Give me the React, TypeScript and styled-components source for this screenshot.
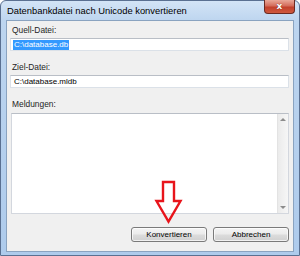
import React from "react";
import styled, { createGlobalStyle } from "styled-components";

const Global = createGlobalStyle`
  html, body { margin: 0; padding: 0; background: #ffffff; }
  body { font-family: "Liberation Sans", Arial, sans-serif; }
`;

const Stage = styled.div`
  position: relative;
  width: 300px;
  height: 256px;
  overflow: hidden;
`;

const Frame = styled.div`
  box-sizing: border-box;
  width: 300px;
  height: 256px;
  display: flex;
  flex-direction: column;
  border: 1px solid #5a7091;
  border-radius: 6px 6px 0 0;
  background: linear-gradient(180deg, #d3e4f6 0px, #bdd5ef 20px, #aecbec 100%);
  padding: 0 5px 3px 5px;
`;

const TitleBar = styled.div`
  height: 19px;
  display: flex;
  align-items: flex-start;
  justify-content: space-between;
`;

const Title = styled.div`
  font-size: 9.4px;
  color: #000;
  padding: 4px 0 0 1px;
  line-height: 11px;
  white-space: nowrap;
`;

const CloseButton = styled.div`
  box-sizing: border-box;
  width: 31px;
  height: 14px;
  margin-top: -1px;
  margin-right: -1px;
  border: 1px solid #6b2a22;
  border-top: none;
  border-radius: 0 0 4px 4px;
  background: linear-gradient(180deg, #e9a899 0%, #d46c5b 45%, #c2402c 55%, #cf5a3f 100%);
  display: flex;
  align-items: center;
  justify-content: center;
  color: #fff;
  font-family: "DejaVu Sans", sans-serif;
  font-weight: bold;
  font-size: 9px;
  line-height: 9px;
  text-shadow: 0 0 1px #5a1a10;
`;

const Client = styled.div`
  flex: 1;
  box-sizing: border-box;
  border: 1px solid #8aa3c0;
  background: #f0f0f0;
  display: flex;
  flex-direction: column;
  padding: 4px 4px 0 2px;
`;

const Label = styled.div<{ $gap: number }>`
  font-size: 8.4px;
  line-height: 10px;
  color: #1e1e1e;
  padding-left: 3px;
  margin-top: ${(p) => p.$gap}px;
`;

const Field = styled.div`
  box-sizing: border-box;
  height: 13px;
  margin-top: 3px;
  margin-left: 1px;
  border: 1px solid #dbe1e8;
  border-top-color: #b9bec6;
  background: #fff;
  display: flex;
  align-items: center;
  padding-left: 2px;
  font-size: 8px;
  color: #000;
`;

const Selected = styled.span`
  background: #3399ff;
  color: #fff;
  line-height: 10px;
  padding: 0 1px;
`;

const Plain = styled.span`
  line-height: 10px;
  padding: 0 1px;
`;

const Memo = styled.div`
  box-sizing: border-box;
  height: 101px;
  margin-top: 4px;
  margin-left: 2px;
  border: 1px solid #d3d7de;
  border-top-color: #b9bec6;
  background: #fff;
  display: flex;
  justify-content: flex-end;
`;

const ScrollTrack = styled.div`
  width: 11px;
  background: linear-gradient(90deg, #ebebeb, #f6f6f6);
  border-left: 1px solid #e3e3e3;
  display: flex;
  flex-direction: column;
  justify-content: space-between;
  align-items: center;
  padding: 4px 0;
  box-sizing: border-box;
`;

const Tri = styled.div<{ $down?: boolean }>`
  width: 0;
  height: 0;
  border-left: 3px solid transparent;
  border-right: 3px solid transparent;
  ${(p) =>
    p.$down
      ? "border-top: 3px solid #8c8c8c;"
      : "border-bottom: 3px solid #8c8c8c;"}
`;

const ButtonRow = styled.div`
  display: flex;
  justify-content: flex-end;
  gap: 6px;
  margin-top: 13px;
`;

const Button = styled.div`
  box-sizing: border-box;
  width: 76px;
  height: 15px;
  border: 1px solid #7a7a7a;
  border-radius: 3px;
  background: linear-gradient(180deg, #f4f4f4 0%, #ebebeb 48%, #dcdcdc 52%, #d0d0d0 100%);
  box-shadow: inset 0 0 0 1px rgba(255, 255, 255, 0.7);
  font-size: 8px;
  color: #000;
  display: flex;
  align-items: center;
  justify-content: center;
`;

const Arrow = styled.svg`
  position: absolute;
  left: 156px;
  top: 181px;
  width: 27px;
  height: 43px;
  overflow: visible;
`;

export default function App() {
  return (
    <>
      <Global />
      <Stage>
        <Frame>
          <TitleBar>
            <Title>Datenbankdatei nach Unicode konvertieren</Title>
            <CloseButton>x</CloseButton>
          </TitleBar>
          <Client>
            <Label $gap={0}>Quell-Datei:</Label>
            <Field>
              <Selected>C:\database.db</Selected>
            </Field>
            <Label $gap={11}>Ziel-Datei:</Label>
            <Field>
              <Plain>C:\database.mldb</Plain>
            </Field>
            <Label $gap={11}>Meldungen:</Label>
            <Memo>
              <ScrollTrack>
                <Tri />
                <Tri $down />
              </ScrollTrack>
            </Memo>
            <ButtonRow>
              <Button>Konvertieren</Button>
              <Button>Abbrechen</Button>
            </ButtonRow>
          </Client>
        </Frame>
        <Arrow viewBox="0 0 27 43">
          <path
            d="M7 1 H18 V20 H24.5 L12.5 40.5 L0.5 20 H7 Z"
            fill="none"
            stroke="#e8141b"
            strokeWidth="2.4"
            strokeLinejoin="miter"
          />
        </Arrow>
      </Stage>
    </>
  );
}
